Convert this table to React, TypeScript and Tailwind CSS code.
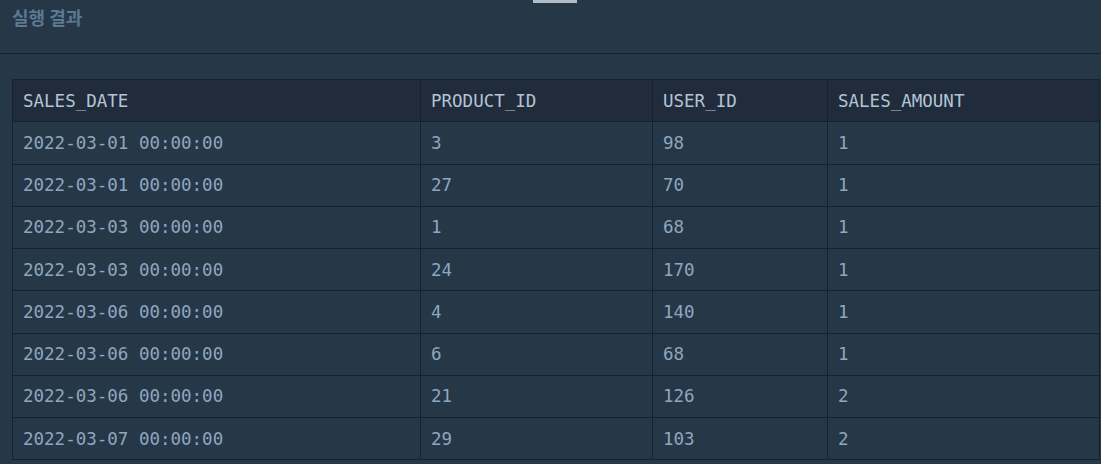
import React from "react";

const rows: [string, string, string, string][] = [
  ["2022-03-01 00:00:00", "3", "98", "1"],
  ["2022-03-01 00:00:00", "27", "70", "1"],
  ["2022-03-03 00:00:00", "1", "68", "1"],
  ["2022-03-03 00:00:00", "24", "170", "1"],
  ["2022-03-06 00:00:00", "4", "140", "1"],
  ["2022-03-06 00:00:00", "6", "68", "1"],
  ["2022-03-06 00:00:00", "21", "126", "2"],
  ["2022-03-07 00:00:00", "29", "103", "2"],
];

const cols = ["SALES_DATE", "PRODUCT_ID", "USER_ID", "SALES_AMOUNT"];
const widths = ["w-[408px]", "w-[232px]", "w-[175px]", "w-[272px]"];

export default function App() {
  return (
    <div className="relative h-[464px] w-[1101px] overflow-hidden bg-[#263747]">
      <div className="absolute left-[533px] top-0 h-[3px] w-[44px] bg-[#b2bdc8]" />
      <div className="h-[54px] border-b border-[#172231] px-3 pt-[5px]">
        <h3
          className="text-[18px] font-bold leading-6 text-[#5d7891]"
          style={{ fontFamily: '"Noto Sans CJK KR", "Noto Sans", sans-serif' }}
        >
          실행 결과
        </h3>
      </div>
      <div className="px-3 pt-[25px]">
        <table
          className="w-[1088px] table-fixed border-collapse text-[17.5px]"
          style={{ fontFamily: '"DejaVu Sans Mono", monospace' }}
        >
          <thead>
            <tr className="h-[42.25px] bg-[#202b3c]">
              {cols.map((c, i) => (
                <th
                  key={c}
                  className={`${widths[i]} border border-[#172231] px-[10px] text-left font-normal text-[#b3c4d5]`}
                >
                  {c}
                </th>
              ))}
            </tr>
          </thead>
          <tbody>
            {rows.map((r, ri) => (
              <tr key={ri} className="h-[42.25px]">
                {r.map((v, ci) => (
                  <td
                    key={ci}
                    className="border border-[#172231] px-[10px] text-[#8ea7c0]"
                  >
                    {v}
                  </td>
                ))}
              </tr>
            ))}
          </tbody>
        </table>
      </div>
    </div>
  );
}
